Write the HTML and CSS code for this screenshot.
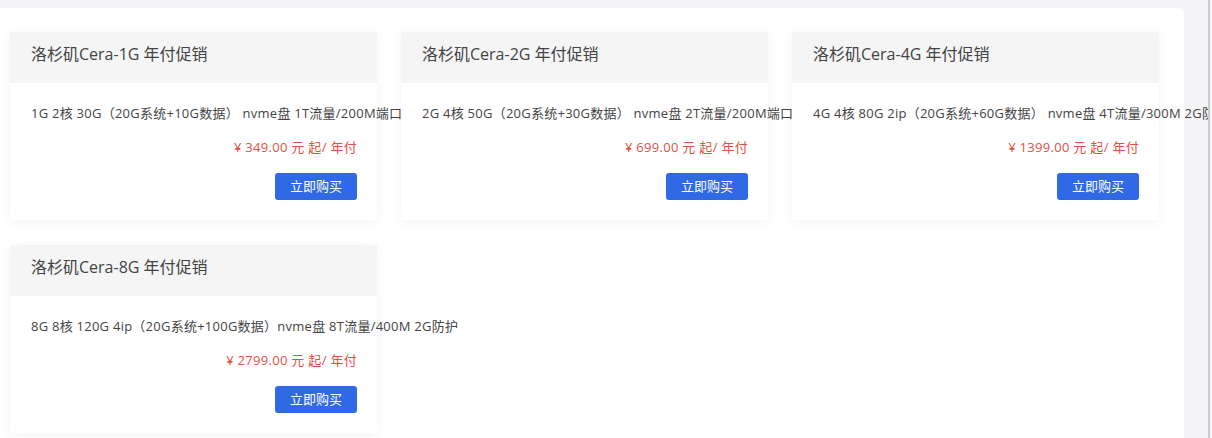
FILE: index.html
```html
<!DOCTYPE html>
<html lang="zh-CN">
<head>
    <meta charset="UTF-8">
    <meta name="viewport" content="width=device-width, initial-scale=1.0">
    <title>年付促销</title>
    <link rel="stylesheet" href="styles.css">
</head>
<body>
    <div class="page">
        <div class="panel">
            <div class="product-list">
                <!-- 1G -->
                <div class="product">
                    <div class="product-head">洛杉矶Cera-1G 年付促销</div>
                    <div class="product-body">
                        <p class="desc">1G 2核 30G（20G系统+10G数据） nvme盘 1T流量/200M端口 2G防护</p>
                        <p class="price">¥ 349.00 元 起/ 年付</p>
                        <div class="actions"><a class="buy-btn" href="#">立即购买</a></div>
                    </div>
                </div>
                <!-- 2G -->
                <div class="product">
                    <div class="product-head">洛杉矶Cera-2G 年付促销</div>
                    <div class="product-body">
                        <p class="desc">2G 4核 50G（20G系统+30G数据） nvme盘 2T流量/200M端口 2G防护</p>
                        <p class="price">¥ 699.00 元 起/ 年付</p>
                        <div class="actions"><a class="buy-btn" href="#">立即购买</a></div>
                    </div>
                </div>
                <!-- 4G -->
                <div class="product">
                    <div class="product-head">洛杉矶Cera-4G 年付促销</div>
                    <div class="product-body">
                        <p class="desc">4G 4核 80G 2ip（20G系统+60G数据） nvme盘 4T流量/300M 2G防护</p>
                        <p class="price">¥ 1399.00 元 起/ 年付</p>
                        <div class="actions"><a class="buy-btn" href="#">立即购买</a></div>
                    </div>
                </div>
                <!-- 8G -->
                <div class="product">
                    <div class="product-head">洛杉矶Cera-8G 年付促销</div>
                    <div class="product-body">
                        <p class="desc">8G 8核 120G 4ip（20G系统+100G数据）nvme盘 8T流量/400M 2G防护</p>
                        <p class="price">¥ 2799.00 元 起/ 年付</p>
                        <div class="actions"><a class="buy-btn" href="#">立即购买</a></div>
                    </div>
                </div>
            </div>
        </div>
    </div>
</body>
</html>
```

FILE: styles.css
```css
html, body {
    margin: 0;
    padding: 0;
}
body {
    font-family: "Open Sans", "Noto Sans CJK SC", sans-serif;
    background-color: #f4f4f7;
    color: #444;
}
.page {
    width: 1210px;
    height: 438px;
    overflow: hidden;
    border-right: 2px solid #cdcdcd;
    padding-top: 8px;
    box-sizing: border-box;
}
.panel {
    width: 1184px;
    min-height: 440px;
    background: #fff;
    border-top-right-radius: 6px;
    padding: 24px 24px 0 10px;
    box-sizing: border-box;
}
.product-list {
    display: grid;
    grid-template-columns: repeat(3, 367px);
    column-gap: 24px;
    row-gap: 25px;
}
.product {
    position: relative;
    background: #fff;
    box-shadow: 0 2px 12px rgba(0, 0, 0, 0.05);
}
.product-head {
    height: 51px;
    padding: 11px 21px 0;
    box-sizing: border-box;
    background: #f5f5f5;
    font-size: 16px;
    line-height: 22px;
    color: #444;
}
.product-body {
    padding: 20px 20px 20px 21px;
}
.desc {
    margin: 0;
    font-size: 13px;
    line-height: 20px;
    letter-spacing: 0.25px;
    white-space: nowrap;
    color: #444;
}
.price {
    margin: 14px 0 0;
    text-align: right;
    font-size: 13px;
    line-height: 20px;
    letter-spacing: 0.3px;
    color: #e2513f;
}
.actions {
    margin-top: 16px;
    text-align: right;
    height: 27px;
}
.buy-btn {
    display: inline-block;
    width: 82px;
    height: 27px;
    line-height: 27px;
    text-align: center;
    background-color: #3069e6;
    color: #fff;
    font-size: 13px;
    border-radius: 3px;
    text-decoration: none;
}
```
